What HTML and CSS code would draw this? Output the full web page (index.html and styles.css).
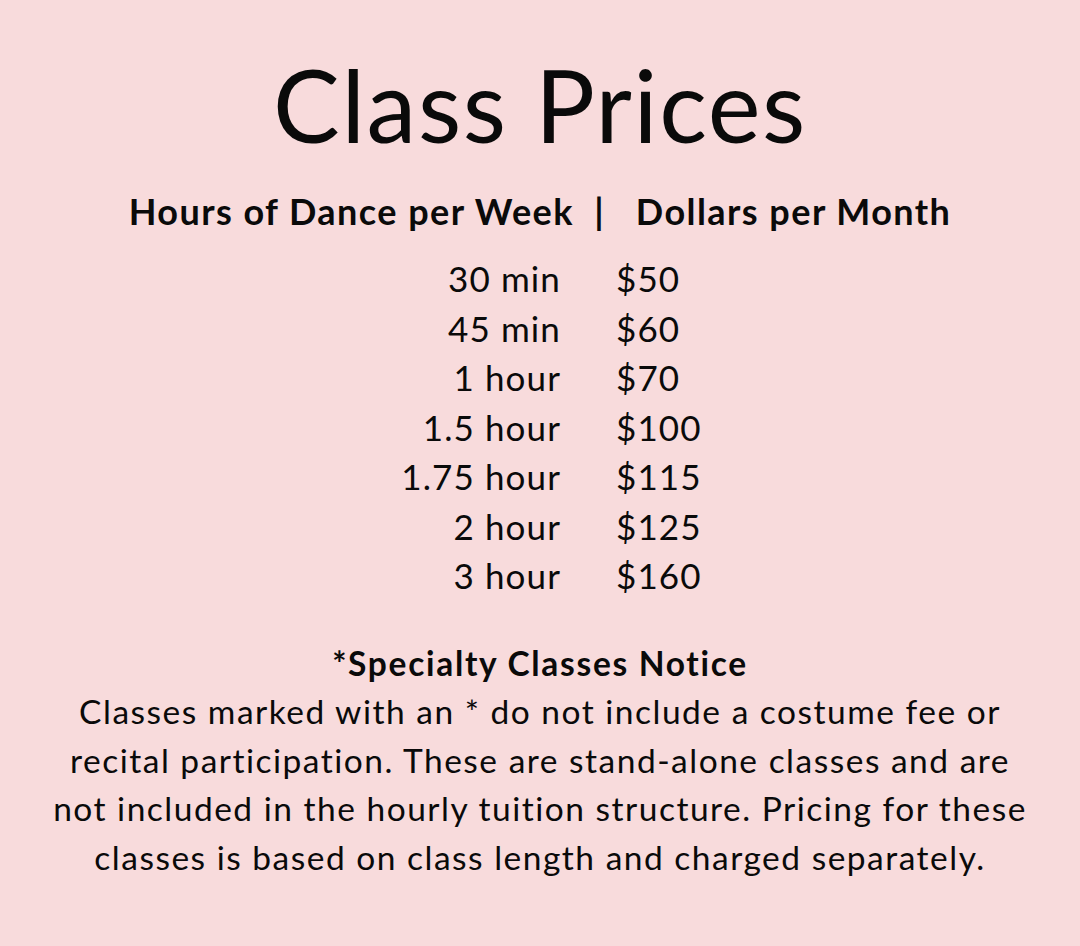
FILE: index.html
```html
<!DOCTYPE html>
<html lang="en">
<head>
<meta charset="utf-8">
<title>Class Prices</title>
<link rel="stylesheet" href="styles.css">
</head>
<body>
<main class="page">
  <h1 class="title">Class Prices</h1>
  <h2 class="head">Hours of Dance per Week&nbsp;&nbsp;|&nbsp;&nbsp; Dollars per Month</h2>
  <div class="table">
    <span class="dur">30 min</span><span class="price">$50</span>
    <span class="dur">45 min</span><span class="price">$60</span>
    <span class="dur">1 hour</span><span class="price">$70</span>
    <span class="dur">1.5 hour</span><span class="price">$100</span>
    <span class="dur">1.75 hour</span><span class="price">$115</span>
    <span class="dur">2 hour</span><span class="price">$125</span>
    <span class="dur">3 hour</span><span class="price">$160</span>
  </div>
  <section class="notice">
    <h3 class="notice-title">*Specialty Classes Notice</h3>
    <p class="notice-text">Classes marked with an * do not include a costume fee or<br>recital participation. These are stand-alone classes and are<br>not included in the hourly tuition structure. Pricing for these<br>classes is based on class length and charged separately.</p>
  </section>
</main>
</body>
</html>
```

FILE: styles.css
```css
html, body {
  margin: 0;
  padding: 0;
}
body {
  background: #f8dbdc;
  color: #0a0a0a;
  font-family: Lato, "Open Sans", sans-serif;
  width: 1080px;
  height: 946px;
  overflow: hidden;
}
.page {
  display: flex;
  flex-direction: column;
  align-items: center;
  padding-top: 50px;
}
.title {
  margin: 0;
  font-weight: 400;
  font-size: 100px;
  line-height: 108px;
  letter-spacing: 1.6px;
}
.head {
  margin: 31px 0 0;
  font-weight: 700;
  font-size: 36px;
  line-height: 44px;
  letter-spacing: 1.45px;
}
.table {
  align-self: stretch;
  display: grid;
  grid-template-columns: 561px 1fr;
  column-gap: 55px;
  margin-top: 21px;
  font-size: 35px;
  line-height: 49.5px;
  letter-spacing: 1.1px;
}
.dur {
  text-align: right;
}
.price {
  text-align: left;
}
.notice {
  margin-top: 38.5px;
  text-align: center;
}
.notice-title {
  margin: 0;
  font-weight: 700;
  font-size: 33.5px;
  line-height: 48px;
  letter-spacing: 1.7px;
}
.notice-text {
  margin: 0;
  font-size: 33.5px;
  line-height: 48.7px;
  letter-spacing: 1.5px;
}
```
